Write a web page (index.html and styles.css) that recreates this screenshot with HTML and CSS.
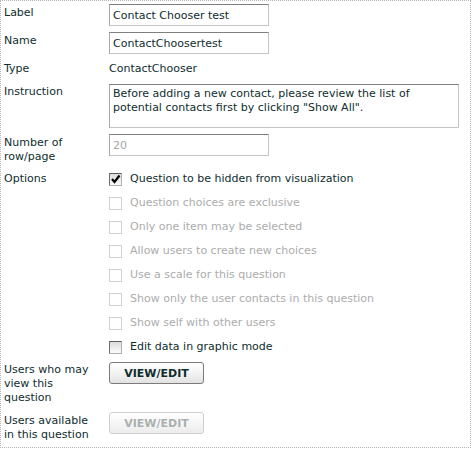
FILE: index.html
```html
<!DOCTYPE html>
<html>
<head>
<meta charset="utf-8">
<link rel="stylesheet" href="styles.css">
</head>
<body>
<div class="panel">
  <div class="row r-input">
    <div class="lbl">Label</div>
    <div class="fld"><input class="txt" type="text" value="Contact Chooser test"></div>
  </div>
  <div class="row r-input">
    <div class="lbl">Name</div>
    <div class="fld"><input class="txt" type="text" value="ContactChoosertest"></div>
  </div>
  <div class="row r-type">
    <div class="lbl">Type</div>
    <div class="fld value">ContactChooser</div>
  </div>
  <div class="row r-instr">
    <div class="lbl">Instruction</div>
    <div class="fld"><textarea class="area">Before adding a new contact, please review the list of potential contacts first by clicking "Show All".</textarea></div>
  </div>
  <div class="row r-num">
    <div class="lbl">Number of row/page</div>
    <div class="fld"><input class="txt dim" type="text" value="20"></div>
  </div>
  <div class="row r-opts">
    <div class="lbl">Options</div>
    <div class="fld opts">
      <div class="opt"><span class="cb on"><svg width="11" height="11" viewBox="0 0 11 11"><polyline points="2,5 4.5,8 9.5,1.5" fill="none" stroke="#000" stroke-width="2.2"/></svg></span><span>Question to be hidden from visualization</span></div>
      <div class="opt off"><span class="cb"></span><span>Question choices are exclusive</span></div>
      <div class="opt off"><span class="cb"></span><span>Only one item may be selected</span></div>
      <div class="opt off"><span class="cb"></span><span>Allow users to create new choices</span></div>
      <div class="opt off"><span class="cb"></span><span>Use a scale for this question</span></div>
      <div class="opt off"><span class="cb"></span><span>Show only the user contacts in this question</span></div>
      <div class="opt off"><span class="cb"></span><span>Show self with other users</span></div>
      <div class="opt"><span class="cb on"></span><span>Edit data in graphic mode</span></div>
    </div>
  </div>
  <div class="row r-btn1">
    <div class="lbl">Users who may view this question</div>
    <div class="fld"><button class="btn">VIEW/EDIT</button></div>
  </div>
  <div class="row r-btn2">
    <div class="lbl">Users available in this question</div>
    <div class="fld"><button class="btn disabled">VIEW/EDIT</button></div>
  </div>
</div>
</body>
</html>
```

FILE: styles.css
```css
html, body {
  margin: 0;
  padding: 0;
  background: #fff;
}
body {
  font-family: Verdana, "DejaVu Sans", sans-serif;
  font-size: 11px;
  line-height: 14px;
  color: #0f2d2d;
}
.panel {
  box-sizing: border-box;
  width: 471px;
  height: 448px;
  border: 1px dotted #b5b5b5;
  padding: 3px 0 0 3px;
}
.row {
  display: grid;
  grid-template-columns: 105px 1fr;
}
.lbl {
  padding-top: 2px;
  padding-right: 8px;
}
.r-input { margin-bottom: 6px; }
.r-input + .r-input { margin-bottom: 8px; }
.r-type { margin-bottom: 8px; }
.r-type .lbl { padding-top: 0; }
.r-instr { margin-bottom: 6px; }
.r-instr .lbl { padding-top: 1px; }
.r-num { margin-bottom: 3px; }
.r-num .lbl { padding-right: 40px; }
.r-opts .lbl { padding-top: 5px; }
.r-btn1 { margin-top: 3px; margin-bottom: 7px; }
.r-btn1 .lbl { padding-top: 1px; padding-right: 14px; }
.r-btn2 .lbl { padding-right: 12px; }

.txt {
  box-sizing: border-box;
  width: 160px;
  height: 22px;
  margin: 0;
  padding: 0 3px;
  font: inherit;
  color: inherit;
  border: 1px solid #c4c4c4;
  border-top-color: #7f7f7f;
  border-left-color: #a8a8a8;
  background: #fff;
  outline: none;
  display: block;
}
.txt.dim { color: #a5a5a5; }
.area {
  box-sizing: border-box;
  display: block;
  width: 350px;
  height: 44px;
  margin: 0;
  padding: 2px 3px;
  font: inherit;
  line-height: 14px;
  color: inherit;
  border: 1px solid #c4c4c4;
  border-top-color: #7f7f7f;
  border-left-color: #a8a8a8;
  resize: none;
  overflow: hidden;
  outline: none;
}

.opts {
  display: flex;
  flex-direction: column;
}
.opt {
  height: 24px;
  display: flex;
  align-items: center;
  gap: 8px;
}
.opt.off { color: #acacac; }
.cb {
  box-sizing: border-box;
  width: 13px;
  height: 13px;
  border: 1px solid #d2d2d2;
  background: #fff;
  display: flex;
  align-items: center;
  justify-content: center;
  flex: none;
}
.cb.on {
  border-color: #8a8a8a #b0b0b0 #b0b0b0 #6e6e6e;
  border-top-color: #5e5e5e;
  background: linear-gradient(#dcdcdc, #fbfbfb);
}

.btn {
  box-sizing: border-box;
  width: 95px;
  height: 22px;
  margin: 0;
  padding: 0;
  font-family: Verdana, "DejaVu Sans", sans-serif;
  font-size: 11px;
  font-weight: bold;
  color: #0f2d2d;
  border: 1px solid #7b7b7b;
  border-radius: 3px;
  background: linear-gradient(#ffffff, #f3f3f3 50%, #e2e2e2);
  display: block;
}
.btn.disabled {
  color: #a9b0b0;
  border-color: #cfcfcf;
  background: linear-gradient(#ffffff, #f6f6f6 50%, #ececec);
}
```
